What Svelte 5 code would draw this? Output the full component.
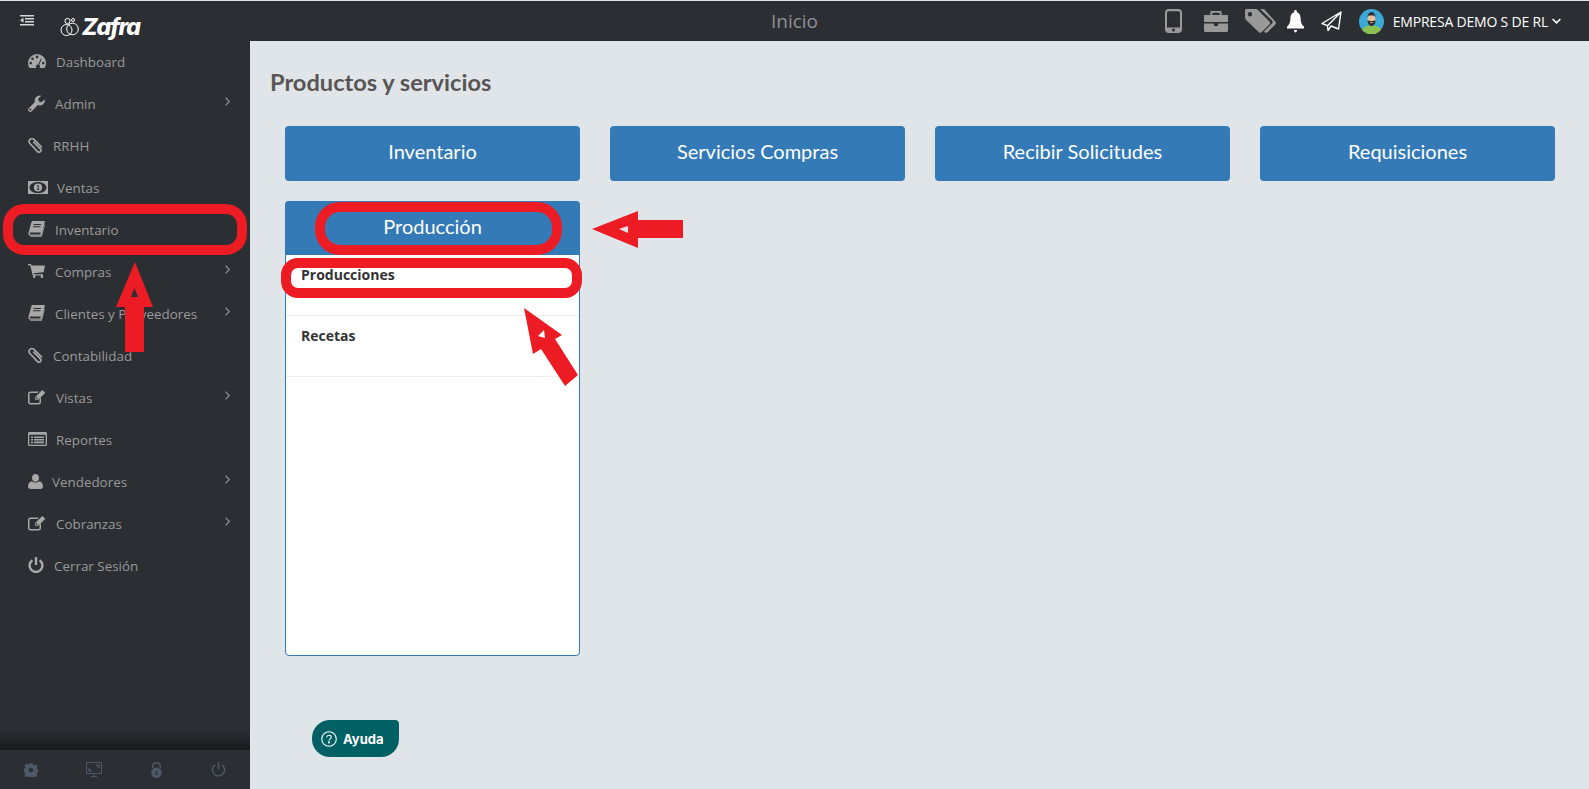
<script>
  const icons = {
    gauge: { vb: '0 0 18 14', d: 'M9 0a9 9 0 0 0-9 9c0 2 .6 3.6 1.600 5h14.800c1-1.400 1.600-3 1.600-5a9 9 0 0 0-9-9zM9 1.600a1.300 1.300 0 1 1 0 2.600 1.300 1.300 0 0 1 0-2.600zM4.500 3.400a1.300 1.300 0 1 1 0 2.600 1.300 1.300 0 0 1 0-2.600zM2.700 7.800a1.300 1.300 0 1 1 0 2.600 1.300 1.300 0 0 1 0-2.600zM15.300 7.800a1.300 1.300 0 1 1 0 2.600 1.300 1.300 0 0 1 0-2.600zM13 4.400l.9.4-2.800 6a2 2 0 1 1-1-.3z' },
    wrench: { vb: '0 0 17 17', d: 'M16.600 4.200l-3 3-2.700-.8-.7-2.600 3-3a5 5 0 0 0-6.300 6.300L.8 13.200a2.100 2.100 0 0 0 3 3l6.100-6.100a5 5 0 0 0 6.700-5.900zM2.300 13.600a1 1 0 1 1 0 2 1 1 0 0 1 0-2z' },
    clip: { vb: '0 0 16 16', line: true, d: 'M14.800 10 6.600 1.700a3 3 0 0 0-4.600 4.200l8.200 8.600a2 2 0 0 0 3-2.900L5.600 3.900' },
    money: { vb: '0 0 20 13', d: 'M0 0h20v13H0zM10 .9C5 .9 1.500 3.400 1.500 6.500S5 12.100 10 12.100s8.500-2.500 8.500-5.600S15 .9 10 .9zM10 2.400a4.100 4.100 0 1 1 0 8.200 4.100 4.100 0 0 1 0-8.200zM9 4.200v.8h.6v3.200H9v.7h2.400v-.7h-.7V4.200z' },
    book: { vb: '0 0 17 16', d: 'M4.400 0h12c.4 0 .5.300.4.700L13.600 13.500c-.2.800-.7 1.300-1.500 1.300H2.500c-1.400 0-2.500-1.200-2-3L3.400 1.200C3.600.4 3.900 0 4.400 0zM5.700 3l-.2.900h7.500l.2-.9zM5.100 5.300l-.2.900h7.500l.2-.9zM2.800 11.500c-.7 0-1 .5-1 1 0 .6.300 1 1 1h9c.3 0 .6-.2.7-.5l.2-1.500zM16.400 3.500l.5.500-2.700 10.400c-.3 1-1 1.600-2 1.600H2.500l-.3-.7h9.900c.8 0 1.200-.4 1.400-1z' },
    cart: { vb: '0 0 17 14', d: 'M0 0h3l.5 1.500H17l-1.400 6.700-10 1 .3 1H15v1.200H4.700L2.200 1.200H0zM5.800 11.500a1.300 1.300 0 1 1 0 2.500 1.300 1.300 0 0 1 0-2.500zM13.500 11.500a1.300 1.300 0 1 1 0 2.500 1.300 1.300 0 0 1 0-2.500z' },
    edit: { vb: '0 0 18 15', d: 'M2.500 1.500h8.500l-1.500 1.500h-7c-.6 0-1 .4-1 1v8c0 .6.4 1 1 1h8c.6 0 1-.4 1-1V9l1.500-1.500V12c0 1.500-1 2.500-2.500 2.500h-8C1 14.500 0 13.500 0 12V4c0-1.500 1-2.500 2.500-2.500zM14.300 0l3 2.800-7 7H7.200V6.900zM8.200 7.200v1.600h1.400l.4-.4-1.500-1.500z' },
    list: { vb: '0 0 19 14', d: 'M1.500 0h16c.8 0 1.500.7 1.500 1.500v11c0 .8-.7 1.500-1.500 1.500h-16C.7 14 0 13.300 0 12.500v-11C0 .7.700 0 1.500 0zM1.300 2.800v9.400c0 .3.200.5.500.5h15.400c.3 0 .5-.2.500-.5V2.800zM3 4.400h2V6H3zM6 4.400h10V6H6zM3 7h2v1.600H3zM6 7h10v1.600H6zM3 9.600h2v1.600H3zM6 9.600h10v1.600H6z' },
    user: { vb: '0 0 15 15', d: 'M7.500 0c2 0 3.500 1.700 3.500 3.900S9.500 7.800 7.500 7.800 4 6.100 4 3.900 5.500 0 7.500 0zM4 7.200c.9.800 2.100 1.300 3.500 1.300S10.100 8 11 7.200c2.500.3 4 2.300 4 5.300 0 1.600-1 2.500-2.500 2.500h-10C1 15 0 14.100 0 12.500c0-3 1.500-5 4-5.300z' },
    power: { vb: '0 0 16 16', d: 'M6.800 0h2.400v8H6.800zM3.700 2.300l1.400 1.900a5.200 5.200 0 1 0 5.800 0l1.400-1.900a7.600 7.600 0 1 1-8.600 0z' }
  };

  const nav = [
    { label: 'Dashboard', icon: 'gauge', w: 18, gap: 10 },
    { label: 'Admin', icon: 'wrench', w: 17, gap: 10, sub: true },
    { label: 'RRHH', icon: 'clip', w: 15, gap: 10 },
    { label: 'Ventas', icon: 'money', w: 20, gap: 9 },
    { label: 'Inventario', icon: 'book', w: 17, gap: 10 },
    { label: 'Compras', icon: 'cart', w: 17, gap: 10, sub: true },
    { label: 'Clientes y Proveedores', icon: 'book', w: 17, gap: 10, sub: true },
    { label: 'Contabilidad', icon: 'clip', w: 15, gap: 10 },
    { label: 'Vistas', icon: 'edit', w: 18, gap: 10, sub: true },
    { label: 'Reportes', icon: 'list', w: 19, gap: 9 },
    { label: 'Vendedores', icon: 'user', w: 15, gap: 9, sub: true },
    { label: 'Cobranzas', icon: 'edit', w: 18, gap: 10, sub: true },
    { label: 'Cerrar Sesión', icon: 'power', w: 16, gap: 10 }
  ];

  const cards = ['Inventario', 'Servicios Compras', 'Recibir Solicitudes', 'Requisiciones'];
  const rows = ['Producciones', 'Recetas'];
</script>

{#snippet glyph(name, w)}
  {@const ic = icons[name]}
  {#if ic.line}
    <svg width={w} viewBox={ic.vb} fill="none" stroke="currentColor" stroke-width="1.700"><path d={ic.d} /></svg>
  {:else}
    <svg width={w} viewBox={ic.vb} fill="currentColor" fill-rule="evenodd"><path d={ic.d} /></svg>
  {/if}
{/snippet}

<div class="page">
  <header class="topbar">
    <div class="brand">
      <svg class="burger" width="14" height="11" viewBox="0 0 14 11" fill="#d8d8d8">
        <path d="M0 0h14v1.500H0zM5 3h9v1.500H5zM5 6h9v1.500H5zM0 9h14v1.500H0zM3.500 2.800v5L0 5.300z" />
      </svg>
      <svg class="bubbles" width="19" height="20" viewBox="0 0 19 20" fill="none" stroke="#fff" stroke-width="1">
        <circle cx="6.500" cy="13" r="5.500" />
        <circle cx="12.500" cy="12" r="5.800" />
        <circle cx="7.500" cy="4" r="2.600" />
        <circle cx="13" cy="3" r="1.500" />
      </svg>
      <span class="logo">Zafra</span>
    </div>
    <div class="title">Inicio</div>
    <div class="tools">
      <svg class="t-phone" width="17" height="24" viewBox="0 0 17 24" fill="#999" fill-rule="evenodd">
        <path d="M3.500 0h10C15.500 0 17 1.500 17 3.500v17c0 2-1.500 3.500-3.500 3.500h-10C1.500 24 0 22.500 0 20.500v-17C0 1.500 1.500 0 3.500 0zM2 4v14.500h13V4c0-1-.5-1.800-1.700-1.800H3.700C2.500 2.200 2 3 2 4zM8.500 19.500a1.500 1.500 0 1 0 0 3 1.500 1.500 0 0 0 0-3z" />
      </svg>
      <svg class="t-case" width="24" height="21" viewBox="0 0 24 21" fill="#999" fill-rule="evenodd">
        <path d="M8 0h8c1 0 1.700.7 1.700 1.700V4H23c.6 0 1 .4 1 1v6H0V5c0-.6.4-1 1-1h5.300V1.700C6.300.7 7 0 8 0zM8.300 1.800V4h7.400V1.800zM0 12.500h10V15h4v-2.500h10V19.500c0 .8-.7 1.500-1.500 1.500h-21C.7 21 0 20.300 0 19.500z" />
      </svg>
      <svg class="t-tags" width="31" height="24" viewBox="0 0 31 24" fill="#999" fill-rule="evenodd">
        <path d="M1.500 0h9c1 0 1.800.4 2.500 1.100L24.500 12.600c.8.800.8 2 0 2.800l-7.800 7.800c-.8.800-2 .8-2.800 0L1.100 11C.4 10.300 0 9.500 0 8.500v-7C0 .6.600 0 1.500 0zM5 3a2.200 2.200 0 1 0 0 4.400A2.200 2.200 0 0 0 5 3z" />
        <path d="M15 0h2.500c1 0 1.800.4 2.500 1.100l10.300 11.500c.8.800.8 2 0 2.800l-7.800 7.800c-.8.800-2 .8-2.800 0l-.7-.7 8-8c.9-.9.900-2.100 0-3z" />
      </svg>
      <svg class="t-bell" width="17" height="23" viewBox="0 0 17 23" fill="#fff">
        <path d="M8.500 0c.8 0 1.300.5 1.300 1.300v.9c2.500.6 3.800 3 3.800 6 0 4 1 6.300 3.400 8.600v1.700H0v-1.700C2.400 14.500 3.400 12.200 3.400 8.200c0-3 1.300-5.400 3.800-6v-.9C7.200.5 7.700 0 8.500 0zM7 20h3c0 1-.6 2.500-1.500 2.500S7 21 7 20z" />
      </svg>
      <svg class="t-plane" width="21" height="21" viewBox="0 0 21 21" fill="none" stroke="#fff" stroke-width="1.400" stroke-linejoin="round">
        <path d="M20 1 1 12.500l5.500 2.200L20 1l-2.500 17-7.500-3-3 4.500-.5-4.800" />
      </svg>
      <svg class="t-avatar" width="25" height="25" viewBox="0 0 25 25">
        <circle cx="12.500" cy="12.500" r="12.500" fill="#3aa9d8" />
        <path d="M3 21c1.500-3.500 5-4.500 9.500-4.500s8 1 9.500 4.500a12.500 12.500 0 0 1-19 0z" fill="#8cc152" />
        <ellipse cx="12.500" cy="10.500" rx="4" ry="5" fill="#e8c39e" />
        <path d="M8.500 8C8.500 5 10.500 3 12.500 3s4 2 4 5l-1.200-1.500h-5.600zM8.500 11c1 .9 2.500 1 4 1s3-.1 4-1c0 3.500-1.800 6-4 6s-4-2.500-4-6z" fill="#33302e" />
        <path d="M11 13.200h3v.8h-3z" fill="#e8c39e" />
      </svg>
      <span class="company">EMPRESA DEMO S DE RL</span>
      <svg class="caret" width="9" height="6" viewBox="0 0 9 6" fill="none" stroke="#fff" stroke-width="1.600"><path d="M.6 1 4.500 4.800 8.400 1" /></svg>
    </div>
  </header>

  <div class="body">
    <aside class="sidebar">
      <nav class="menu">
        {#each nav as item}
          <a class="item" href="#top">
            <span class="ico" style:margin-right="{item.gap}px">{@render glyph(item.icon, item.w)}</span>
            <span class="lbl">{item.label}</span>
            {#if item.sub}
              <svg class="more" width="5" height="9" viewBox="0 0 5 9" fill="none" stroke="currentColor" stroke-width="1.100"><path d="M.6.6 4.300 4.500.6 8.400" /></svg>
            {/if}
          </a>
        {/each}
      </nav>
      <div class="foot">
        <svg width="14" height="14" viewBox="0 0 15 15" fill="#4f5866" fill-rule="evenodd">
          <path d="M6 0h3l.4 2 1.400.6 1.700-1.100 2 2-1.100 1.700.6 1.400 2 .4v3l-2 .4-.6 1.400 1.100 1.700-2 2-1.700-1.100-1.400.6-.4 2H6l-.4-2-1.400-.6-1.700 1.100-2-2 1.100-1.700-.6-1.400-2-.4V6l2-.4.6-1.400-1.100-1.700 2-2 1.700 1.100L5.600 2zM7.500 5a2.500 2.500 0 1 0 0 5 2.500 2.500 0 0 0 0-5z" />
        </svg>
        <svg width="16" height="15" viewBox="0 0 16 15" fill="none" stroke="#4f5866">
          <path d="M.5.500h15v11H.500zM5 14.500h6M8 11.500v3" />
          <path d="M9.500 2.500H13.500V6.500zM2.500 5.500 6.500 9.500H2.500z" fill="#4f5866" stroke="none" />
        </svg>
        <svg width="11" height="16" viewBox="0 0 11 16" fill="#4f5866" fill-rule="evenodd">
          <path d="M5.500 0c2.700 0 4.600 1.900 4.600 4.500v1.800H8.600V4.500c0-1.700-1.300-3-3.100-3s-3.100 1.300-3.100 3v1.800H.9V4.500C.9 1.900 2.800 0 5.500 0zM5.500 5.500a5.200 5.200 0 1 1 0 10.500 5.200 5.200 0 0 1 0-10.500zM4.800 9v4h1.400V9z" />
        </svg>
        <svg width="15" height="15" viewBox="0 0 16 16" fill="#4f5866" fill-rule="evenodd">
          <path d="M7.200 0h1.600v8H7.200zM3.900 2.300l1 1.300a5.700 5.700 0 1 0 6.200 0l1-1.300a7.300 7.300 0 1 1-8.200 0z" />
        </svg>
      </div>
    </aside>

    <main class="content">
      <h1 class="heading">Productos y servicios</h1>
      <div class="grid">
        {#each cards as card}
          <button class="card">{card}</button>
        {/each}
        <section class="panel">
          <div class="panel__head">Producción</div>
          {#each rows as row}
            <div class="panel__row">{row}</div>
          {/each}
        </section>
      </div>
      <button class="help">
        <svg width="16" height="16" viewBox="0 0 16 16" fill="none" stroke="#fff" stroke-width="1.100">
          <circle cx="8" cy="8" r="7.300" />
          <path d="M5.800 6.300C5.800 5 6.800 4.300 8 4.300s2.200.8 2.200 1.900c0 1.700-2.200 1.600-2.200 3.300" />
          <circle cx="8" cy="11.400" r=".5" fill="#fff" />
        </svg>
        Ayuda
      </button>
    </main>
  </div>

  <!-- red markers drawn on top of the screenshot -->
  <svg class="marks" width="1589" height="789" viewBox="0 0 1589 789">
    <g fill="none" stroke="#ed1c24" stroke-width="10">
      <rect x="8" y="209" width="234" height="41" rx="16" />
      <rect x="320" y="207" width="237" height="43" rx="20" />
      <rect x="286" y="263" width="291" height="30" rx="12" />
    </g>
    <g fill="#ed1c24">
      <path d="M135 262 153 307H144V352H125V307H116ZM134.500 288 131 297H138Z" fill-rule="evenodd" />
      <path d="M592 229 638 211V220H683V238H638V248ZM619 229 628 226V233Z" fill-rule="evenodd" />
      <path d="M524 308 562 335 555 339 578 375 565 386 541 349 533 354ZM538 336 544 330 545 338Z" fill-rule="evenodd" />
    </g>
  </svg>
</div>

<style>
  :global(body) { margin: 0; }

  .page {
    position: relative;
    width: 1589px; height: 789px;
    overflow: hidden;
    box-sizing: border-box;
    padding-top: 1px;
    background: #e0e5ea;
    font-family: "Open Sans", sans-serif;
  }

  .topbar {
    display: flex; align-items: center;
    position: relative;
    height: 40px;
    background: #2b2e33;
  }

  .brand { display: flex; align-items: center; width: 250px; }
  .burger { margin: -1px 0 0 20px; }
  .bubbles { margin: 11px 0 0 26px; }
  .logo {
    margin: 11px 0 0 3px;
    font: italic 800 23px "Inter", sans-serif;
    letter-spacing: -1.2px;
    color: #fff;
  }

  .title {
    position: absolute; left: 0; right: 0; top: 8px;
    text-align: center;
    font-size: 19px; line-height: 24px;
    color: #8e9195;
  }

  .tools { position: relative; display: flex; align-items: center; margin-left: auto; padding-right: 28px; }
  .t-phone { margin-right: 22px; }
  .t-case { margin-right: 17px; }
  .t-tags { margin-right: 11px; }
  .t-bell { margin-right: 17px; }
  .t-plane { margin-right: 17px; }
  .company { margin-left: 9px; font-size: 14px; letter-spacing: -0.2px; color: #fff; }
  .caret { margin-left: 4px; }

  .body { display: flex; height: 748px; }

  .sidebar {
    display: flex; flex-direction: column;
    width: 250px; flex: none;
    background: #2b2e33;
  }

  .menu { flex: 1; margin-top: -1px; background: linear-gradient(#2b2e33 0, #2b2e33 690px, #17191c 710px); }

  .item {
    display: flex; align-items: center;
    height: 42px;
    padding: 0 20px 0 28px;
    font-size: 13.4px;
    color: #9a9a9a;
    text-decoration: none;
  }
  .ico { display: flex; color: #a8a8a8; }
  .lbl { flex: 1; margin-top: 2px; }
  .more { margin: -4px 0 0 0; }

  .foot {
    display: grid; grid-template-columns: repeat(4, 1fr);
    align-items: center; justify-items: center;
    height: 39px; flex: none;
    background: #2b2e33;
  }

  .content { position: relative; flex: 1; padding: 0 20px; }

  .heading {
    margin: 26px 0 0;
    font: 700 23.6px/30px "Lato", sans-serif;
    color: #5a5555;
  }

  .grid {
    display: grid; grid-template-columns: repeat(4, 295px);
    gap: 20px 30px;
    margin: 29px 0 0 15px;
  }

  .card {
    height: 55px;
    padding: 0 0 5px;
    border: 0; border-radius: 4px;
    background: #337ab7;
    font: 400 20px "Lato", sans-serif;
    color: #fff;
  }

  .panel {
    height: 455px;
    box-sizing: border-box;
    border: 1px solid #337ab7; border-radius: 4px;
    background: #fff;
  }
  .panel__head {
    height: 54px; margin: -1px -1px 0;
    border-radius: 4px 4px 0 0;
    background: #337ab7;
    font: 400 20px/50px "Lato", sans-serif;
    text-align: center;
    color: #fff;
  }
  .panel__row {
    height: 49px;
    padding: 11px 15px 0;
    border-bottom: 1px solid #eee;
    font-size: 14px; font-weight: 700; line-height: 18px;
    color: #333;
  }

  .help {
    position: absolute; left: 62px; top: 679px;
    display: flex; align-items: center; gap: 6px;
    width: 87px; height: 37px;
    padding: 0 0 0 9px;
    border: 0; border-radius: 18px 4px 18px 18px;
    background: #006064;
    font: 700 13px "Inter", sans-serif;
    color: #fff;
  }

  .marks { position: absolute; left: 0; top: 0; pointer-events: none; }
</style>
